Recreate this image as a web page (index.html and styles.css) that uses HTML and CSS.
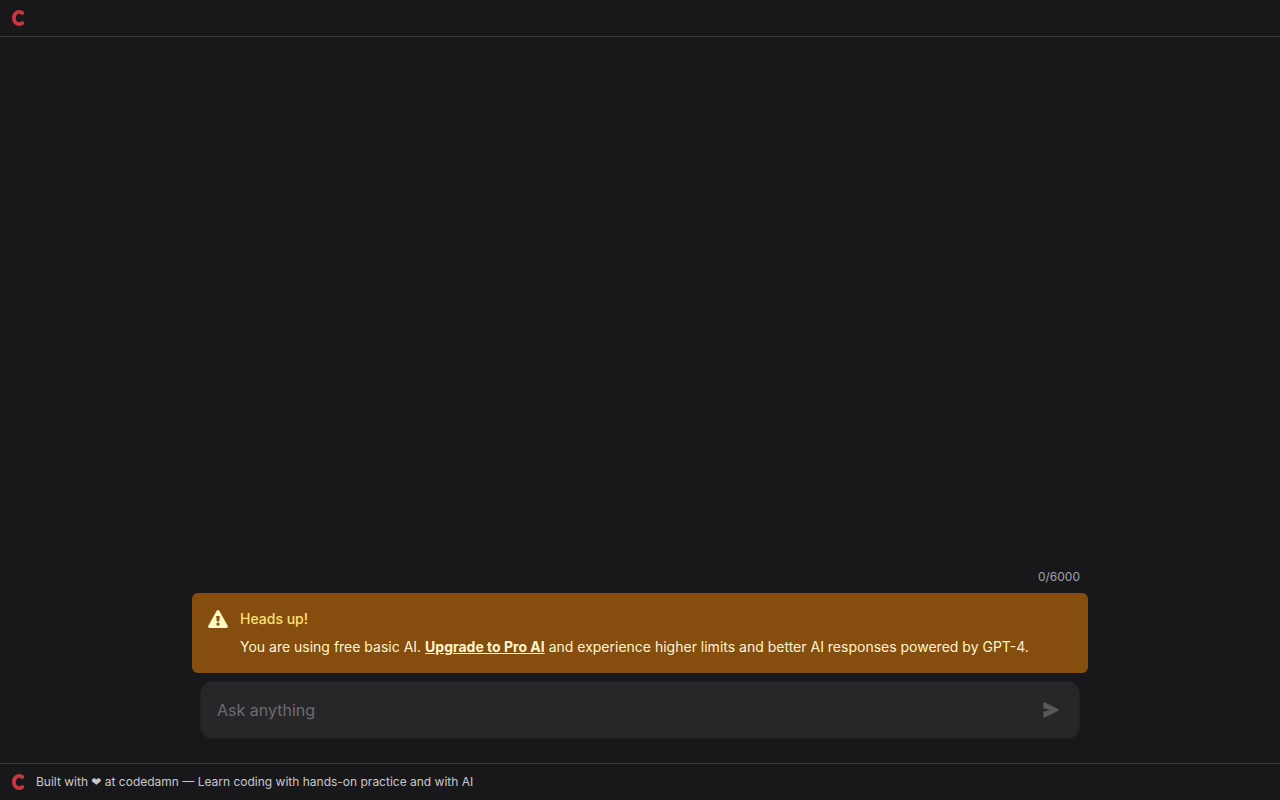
FILE: index.html
```html
<!DOCTYPE html>
<html lang="en">
<head>
    <meta charset="UTF-8">
    <meta name="viewport" content="width=device-width, initial-scale=1.0">
    <title>codedamn AI</title>
    <link rel="stylesheet" href="styles.css">
</head>
<body>
    <header class="topbar">
        <a href="#" class="logo" aria-label="codedamn">
            <svg width="12" height="16" viewBox="0 0 12 16" fill="none" stroke="currentColor" stroke-width="3.800" stroke-linejoin="round">
                <path d="M11.500 4.300C10.300 2.500 9 1.900 7.600 1.900C4.100 1.900 1.900 4.500 1.900 8C1.900 11.500 4.100 14.100 7.600 14.100C9 14.100 10.300 13.500 11.500 11.700"/>
            </svg>
        </a>
    </header>

    <main class="chat">
        <div class="chat-panel">
            <p class="counter">0/6000</p>
            <div class="alert">
                <svg class="alert-icon" width="20" height="20" viewBox="0 0 20 20" fill="currentColor" aria-hidden="true">
                    <path fill-rule="evenodd" d="M8.700 1.800C9.300 0.800 10.700 0.800 11.300 1.800L19.700 16.700C20.300 17.800 19.600 19 18.400 19H1.600C0.400 19-0.300 17.800 0.300 16.700ZM8.300 7L8.700 12.500H11.300L11.700 7ZM10 13.400A1.700 1.700 0 1 0 10 16.800A1.700 1.700 0 1 0 10 13.400Z"/>
                </svg>
                <div>
                    <h3 class="alert-title">Heads up!</h3>
                    <p class="alert-text">You are using free basic AI. <a href="#">Upgrade to Pro AI</a> and experience higher limits and better AI responses powered by GPT-4.</p>
                </div>
            </div>
            <form class="ask-form">
                <input type="text" class="ask-input" placeholder="Ask anything" aria-label="Ask anything">
                <button type="button" class="send-button" aria-label="Send">
                    <svg width="16" height="16" viewBox="0 0 16 16" fill="currentColor">
                        <path d="M0.300 1.200C0.100 0.400 0.700-0.100 1.500 0.300L15.300 7.200C16 7.600 16 8.400 15.300 8.800L1.500 15.700C0.700 16.100 0.100 15.600 0.300 14.800V9.800L7.500 8L0.300 6.200Z"/>
                    </svg>
                </button>
            </form>
        </div>
    </main>

    <footer class="footer">
        <a href="#" class="logo" aria-label="codedamn">
            <svg width="12" height="16" viewBox="0 0 12 16" fill="none" stroke="currentColor" stroke-width="3.800" stroke-linejoin="round">
                <path d="M11.500 4.300C10.300 2.500 9 1.900 7.600 1.900C4.100 1.900 1.900 4.500 1.900 8C1.900 11.500 4.100 14.100 7.600 14.100C9 14.100 10.300 13.500 11.500 11.700"/>
            </svg>
        </a>
        <p>Built with <span class="heart">❤</span> at codedamn — Learn coding with hands-on practice and with AI</p>
    </footer>
</body>
</html>
```
FILE: styles.css
```css
* {
    box-sizing: border-box;
}

body {
    margin: 0;
    min-height: 100vh;
    display: flex;
    flex-direction: column;
    background-color: #18181b;
    color: #c8c8cc;
    font-family: Inter, "DejaVu Sans", sans-serif;
}

h3,
p {
    margin: 0;
}

.topbar,
.footer {
    display: flex;
    align-items: center;
    gap: 12px;
    padding: 10px 12px;
}

.topbar {
    border-bottom: 1px solid #3a3a3d;
}

.footer {
    border-top: 1px solid #3a3a3d;
    font-size: 12px;
    line-height: 16px;
}

.heart {
    font-family: "DejaVu Sans", sans-serif;
    line-height: 1;
}

.logo {
    display: flex;
    color: #c9363f;
}

/* Chat area, the input stays at the bottom */
.chat {
    flex: 1;
    display: flex;
    flex-direction: column;
    justify-content: flex-end;
    padding: 0 16px 24px;
}

.chat-panel {
    width: 100%;
    max-width: 896px;
    margin: 0 auto;
}

.counter {
    padding: 0 8px;
    margin-bottom: 8px;
    text-align: right;
    font-size: 12px;
    line-height: 16px;
    color: #a1a1a4;
}

.alert {
    display: flex;
    gap: 12px;
    padding: 16px;
    border-radius: 6px;
    background-color: #854d0e;
}

.alert-icon {
    flex-shrink: 0;
    color: #fef9c3;
}

.alert-title {
    font-size: 14px;
    line-height: 20px;
    font-weight: 500;
    color: #fde272;
}

.alert-text {
    margin-top: 8px;
    font-size: 14px;
    line-height: 20px;
    color: #fef5d0;
}

.alert-text a {
    color: inherit;
    font-weight: 700;
    text-decoration: underline;
}

.ask-form {
    display: flex;
    align-items: center;
    margin: 8px 8px 0;
    border: 1px solid #202023;
    border-radius: 12px;
    background-color: #27272a;
}

.ask-input {
    flex: 1;
    min-width: 0;
    padding: 16px;
    border: none;
    outline: none;
    background: none;
    color: #fff;
    font-family: inherit;
    font-size: 16px;
    line-height: 24px;
}

.ask-input::placeholder {
    color: #6c6c70;
}

.send-button {
    display: flex;
    padding: 8px;
    margin-right: 12px;
    border: none;
    background: none;
    color: #58585b;
    cursor: pointer;
}
```
